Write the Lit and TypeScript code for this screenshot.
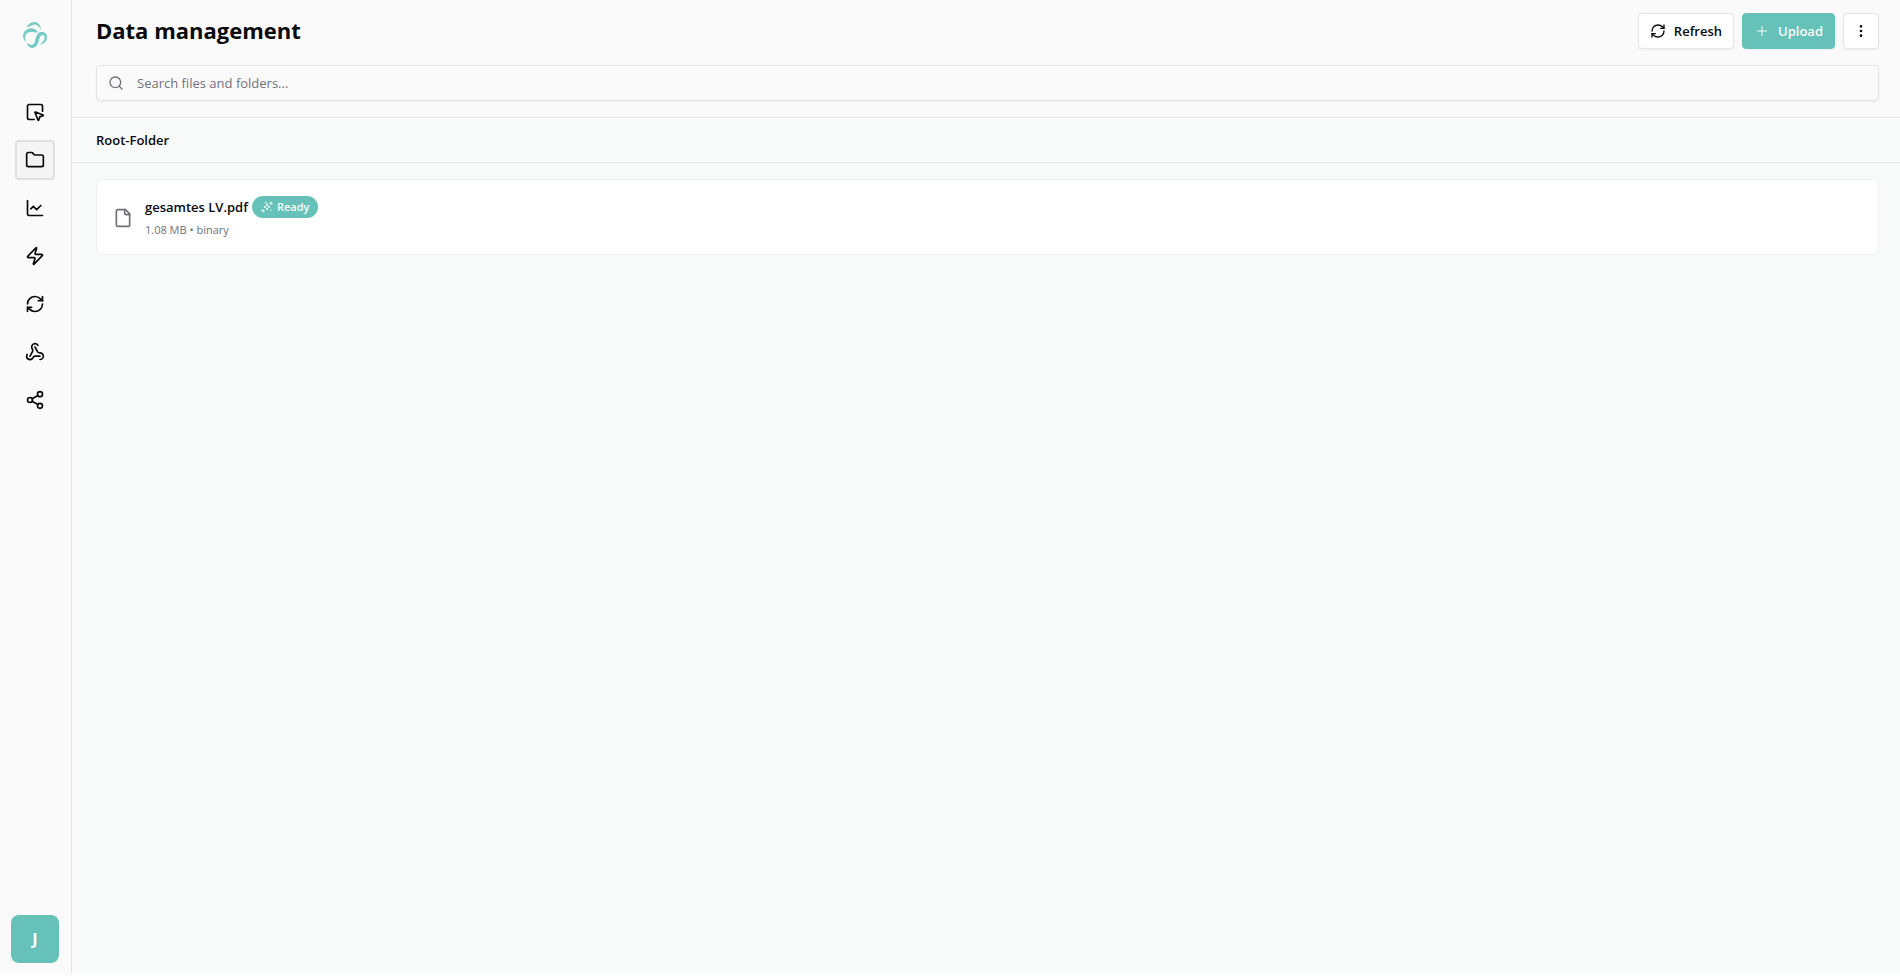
import { LitElement, html, svg, css } from "lit";
import { customElement } from "lit/decorators.js";

const icons = {
  pointer: svg`<path d="M12.034 12.681a.498.498 0 0 1 .647-.647l9 3.5a.5.5 0 0 1-.033.943l-3.444 1.068a1 1 0 0 0-.66.66l-1.067 3.443a.5.5 0 0 1-.943.033z"/><path d="M21 11V5a2 2 0 0 0-2-2H5a2 2 0 0 0-2 2v14a2 2 0 0 0 2 2h6"/>`,
  folder: svg`<path d="M20 20a2 2 0 0 0 2-2V8a2 2 0 0 0-2-2h-7.9a2 2 0 0 1-1.69-.9L9.6 3.9A2 2 0 0 0 7.93 3H4a2 2 0 0 0-2 2v13a2 2 0 0 0 2 2Z"/>`,
  chart: svg`<path d="M3 3v16a2 2 0 0 0 2 2h16"/><path d="m19 9-5 5-4-4-3 3"/>`,
  zap: svg`<path d="M4 14a1 1 0 0 1-.78-1.63l9.9-10.2a.5.5 0 0 1 .86.46l-1.92 6.02A1 1 0 0 0 13 10h7a1 1 0 0 1 .78 1.63l-9.9 10.2a.5.5 0 0 1-.86-.46l1.92-6.02A1 1 0 0 0 11 14z"/>`,
  refresh: svg`<path d="M3 12a9 9 0 0 1 9-9 9.75 9.75 0 0 1 6.74 2.74L21 8"/><path d="M21 3v5h-5"/><path d="M21 12a9 9 0 0 1-9 9 9.75 9.75 0 0 1-6.74-2.74L3 16"/><path d="M8 16H3v5"/>`,
  webhook: svg`<path d="M18 16.98h-5.99c-1.1 0-1.95.94-2.48 1.9A4 4 0 0 1 2 17c.01-.7.2-1.4.57-2"/><path d="m6 17 3.13-5.78c.53-.97.1-2.18-.5-3.1a4 4 0 1 1 6.89-4.06"/><path d="m12 6 3.13 5.73C15.66 12.7 16.9 13 18 13a4 4 0 0 1 0 8"/>`,
  share: svg`<circle cx="18" cy="5" r="3"/><circle cx="6" cy="12" r="3"/><circle cx="18" cy="19" r="3"/><path d="m8.59 13.51 6.83 3.98M15.41 6.51l-6.82 3.98"/>`,
  plus: svg`<path d="M5 12h14M12 5v14"/>`,
  more: svg`<circle cx="12" cy="12" r="1"/><circle cx="12" cy="5" r="1"/><circle cx="12" cy="19" r="1"/>`,
  search: svg`<circle cx="11" cy="11" r="8"/><path d="m21 21-4.3-4.3"/>`,
  file: svg`<path d="M15 2H6a2 2 0 0 0-2 2v16a2 2 0 0 0 2 2h12a2 2 0 0 0 2-2V7Z"/><path d="M14 2v4a2 2 0 0 0 2 2h4"/>`,
  sparkles: svg`<path d="M13 7.5l1.3 3.7a2 2 0 0 0 1.3 1.2l3.6 1.2-3.6 1.3a2 2 0 0 0-1.3 1.2L13 19.8l-1.3-3.7a2 2 0 0 0-1.2-1.2l-3.7-1.3 3.7-1.2a2 2 0 0 0 1.2-1.2z" transform="translate(-1 -2)"/><path d="M20 2v5M22.500 4.500h-5M9 2v2M4 17v5M6.500 19.500h-5M20 18v1"/>`,
};

type IconName = keyof typeof icons;

const icon = (name: IconName, size = "md") =>
  html`<svg class="icon ${size}" viewBox="0 0 24 24" aria-hidden="true">${icons[name]}</svg>`;

const navItems: { icon: IconName; label: string }[] = [
  { icon: "pointer", label: "Workspace" },
  { icon: "folder", label: "Data management" },
  { icon: "chart", label: "Analytics" },
  { icon: "zap", label: "Automations" },
  { icon: "refresh", label: "Sync" },
  { icon: "webhook", label: "Webhooks" },
  { icon: "share", label: "Sharing" },
];

@customElement("app-root")
export class AppRoot extends LitElement {
  static styles = css`
    :host {
      display: block;
      min-height: 100vh;
      box-sizing: border-box;
      padding-bottom: 3px;
      background: #fcfcfc;
      color: #09090b;
      font: 14px/20px "Segoe UI", "Open Sans", "Noto Sans", sans-serif;
    }
    * { box-sizing: border-box; }
    .layout { display: flex; min-height: calc(100vh - 3px); }
    .icon { flex: none; fill: none; stroke: currentColor; stroke-width: 2; stroke-linecap: round; stroke-linejoin: round; }
    .xs { width: 12px; height: 12px; }
    .sm { width: 16px; height: 16px; }
    .md { width: 20px; height: 20px; }
    .sidebar {
      flex: none;
      display: flex;
      flex-direction: column;
      align-items: center;
      width: 72px;
      padding: 20px 12px 10px 11px;
      background: #fafafa;
      border-right: 1px solid #e2e3e4;
    }
    .logo { width: 30px; height: 30px; color: #76cbc3; margin-bottom: 42px; }
    .logo svg { display: block; width: 100%; height: 100%; }
    .nav { display: flex; flex-direction: column; gap: 8px; }
    .nav-link {
      display: grid;
      place-items: center;
      width: 40px;
      height: 40px;
      border-radius: 4px;
      border: 2px solid transparent;
      color: inherit;
    }
    .nav-link.active { background: #f4f4f4; border-color: #e0e0e0; }
    .avatar {
      width: 48px;
      height: 48px;
      margin-top: auto;
      border: 0;
      border-radius: 8px;
      background: #66c2b8;
      color: #fff;
      font: inherit;
      font-size: 16px;
      font-weight: 700;
    }
    .main { flex: 1; min-width: 0; background: #f9fbfa; }
    .header {
      display: grid;
      gap: 16px;
      padding: 13px 21px 16px 24px;
      background: #fafafa;
      border-bottom: 1px solid #e2e3e4;
    }
    .title-row { display: flex; align-items: flex-start; justify-content: space-between; }
    h1 { margin: 0; font-size: 22px; line-height: 34px; font-weight: 700; }
    .actions { display: flex; gap: 8px; }
    .button {
      display: flex;
      align-items: center;
      justify-content: center;
      gap: 8px;
      height: 36px;
      padding: 0 11px;
      border: 1px solid #e4e4e7;
      border-radius: 4px;
      background: #fff;
      color: inherit;
      font: inherit;
      font-size: 13px;
      font-weight: 600;
      box-shadow: 0 1px 2px rgba(0, 0, 0, 0.05);
    }
    .primary { background: #66c2b8; border-color: #66c2b8; color: #fafafa; }
    .primary .icon { stroke-width: 1.5; }
    .square { width: 36px; padding: 0; }
    .search {
      display: flex;
      align-items: center;
      gap: 13px;
      height: 36px;
      padding: 0 11px;
      border: 1px solid #e2e3e4;
      border-radius: 4px;
      box-shadow: 0 1px 2px rgba(0, 0, 0, 0.05);
      color: #71717a;
    }
    .search input {
      flex: 1;
      min-width: 0;
      padding: 0;
      border: 0;
      outline: 0;
      background: none;
      color: #09090b;
      font: inherit;
      font-size: 13px;
    }
    .search input::placeholder { color: #71717a; opacity: 1; }
    .crumbs { padding: 12px 24px; border-bottom: 1px solid #e2e3e4; font-size: 13px; font-weight: 600; }
    .files { margin: 0; padding: 16px 21px 16px 24px; list-style: none; }
    .file {
      display: flex;
      align-items: center;
      gap: 12px;
      padding: 15px 16px 14px;
      background: #fff;
      border: 1px solid #eff1f0;
      border-radius: 6px;
    }
    .file > .icon { color: #71717a; }
    .file-head { display: flex; align-items: center; gap: 4px; height: 24px; font-size: 13px; font-weight: 600; }
    .badge {
      display: flex;
      align-items: center;
      gap: 4px;
      padding: 3px 9px;
      border-radius: 11px;
      background: #66c2b8;
      color: #fafafa;
      font-size: 11px;
      line-height: 16px;
      font-weight: 600;
    }
    .meta { margin-top: 1px; color: #71717a; font-size: 11px; line-height: 20px; }
  `;

  render() {
    return html`
      <div class="layout">
        <aside class="sidebar">
          <div class="logo">
            <svg viewBox="0 0 90 90" fill="currentColor" aria-hidden="true">
              <path d="M20 21C26 10 36 5 46 6C56 8 63 18 64 31C60 23 54 16 45 13C37 15 29 22 20 21Z"/>
              <path d="M54 36C46 23 28 21 17 31C6 41 7 58 19 67C14 54 14 44 23 38C32 33 44 38 50 38Z"/>
              <path d="M19 67C22 78 30 85 38 84C51 82 55 70 58 57C61 45 69 41 73 49C76 57 70 67 57 74C72 74 83 61 81 49C78 33 60 31 53 42C47 50 47 60 43 68C39 77 27 76 19 67Z"/>
            </svg>
          </div>
          <nav class="nav" aria-label="Main">
            ${navItems.map((item, i) => html`<a class="nav-link ${i === 1 ? "active" : ""}" href="#" aria-label=${item.label}>${icon(item.icon)}</a>`)}
          </nav>
          <button class="avatar">J</button>
        </aside>
        <main class="main">
          <header class="header">
            <div class="title-row">
              <h1>Data management</h1>
              <div class="actions">
                <button class="button">${icon("refresh", "sm")}Refresh</button>
                <button class="button primary">${icon("plus", "sm")}Upload</button>
                <button class="button square" aria-label="More">${icon("more", "sm")}</button>
              </div>
            </div>
            <label class="search">
              ${icon("search", "sm")}
              <input type="text" aria-label="Search files and folders" placeholder="Search files and folders..." />
            </label>
          </header>
          <div class="crumbs">Root-Folder</div>
          <ul class="files">
            <li class="file">
              ${icon("file")}
              <div>
                <div class="file-head">gesamtes LV.pdf <span class="badge">${icon("sparkles", "xs")}Ready</span></div>
                <div class="meta">1.08 MB • binary</div>
              </div>
            </li>
          </ul>
        </main>
      </div>
    `;
  }
}
